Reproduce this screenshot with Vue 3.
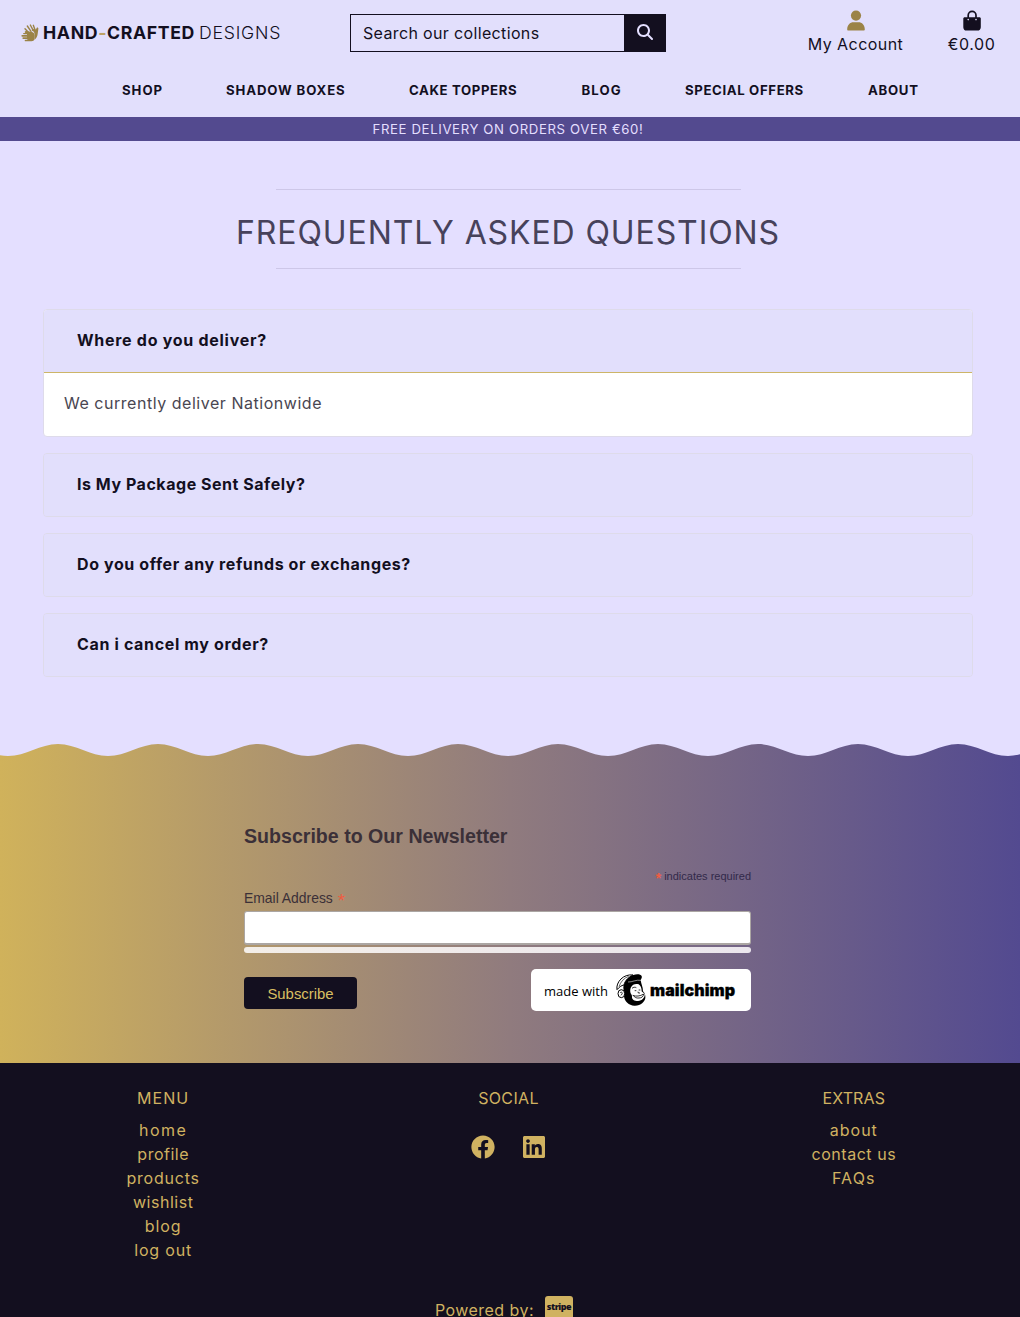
<script setup>
const nav = [
  { label: 'SHOP', width: 40, spacing: 0.95 },
  { label: 'SHADOW BOXES', width: 119, spacing: 0.87 },
  { label: 'CAKE TOPPERS', width: 108.5, spacing: 0.62 },
  { label: 'BLOG', width: 39.5, spacing: 1.1 },
  { label: 'SPECIAL OFFERS', width: 119, spacing: 0.63 },
  { label: 'ABOUT', width: 50, spacing: 0.7 },
]

const faqs = [
  { question: 'Where do you deliver?', answer: 'We currently deliver Nationwide', spacing: 0.72 },
  { question: 'Is My Package Sent Safely?', spacing: 0.53 },
  { question: 'Do you offer any refunds or exchanges?', spacing: 0.6 },
  { question: 'Can i cancel my order?', spacing: 0.65 },
]

const menuLinks = [
  { label: 'home', spacing: 1.5 },
  { label: 'profile', spacing: 0.5 },
  { label: 'products', spacing: 0.78 },
  { label: 'wishlist', spacing: 0.53 },
  { label: 'blog', spacing: 0.95 },
  { label: 'log out', spacing: 0.82 },
]
const extraLinks = [
  { label: 'about', spacing: 0.97 },
  { label: 'contact us', spacing: 0.55 },
  { label: 'FAQs', spacing: 1.15 },
]

const track = (px) => ({ letterSpacing: px + 'px' })

// Crests sit at x = 58 + 100n, troughs at x = 8 + 100n.
let wave = 'M-42 0'
for (let x = -42; x < 1040; x += 100) {
  wave += `C${x + 18} 0 ${x + 32} 12 ${x + 50} 12S${x + 82} 0 ${x + 100} 0`
}
wave += 'Z'
</script>

<template>
  <div class="page">
    <header class="header">
      <div class="top">
        <a class="logo">
          <svg class="hands" viewBox="0 0 54 54" fill="none" stroke-linecap="round">
            <g stroke="#9b8347">
              <path d="M12 14l10 11M19 6l11 16M28 3l9 17M37 4l6 16" stroke-width="4.2" />
              <path d="M35 18c6 1 8 5 9 12" stroke-width="5" />
            </g>
            <path d="M44 18l3-6c2-3 6-1 5 3l-2 15c-1 8-4 13-9 17V29c0-5-2-9-7-12l8-3z" fill="#9b8347" />
            <path d="M18 27l-5 0c-4-3-1-7 3-6l17 3c5 1 8 5 8 10v9c0 6-4 9-10 9H14c-4 0-4-5 0-5h5v-2H7c-4 0-4-5 0-5h11v-2H4c-4 0-4-5 0-5h14v-2H9c-4 0-4-4 0-4z" fill="#9b8347" />
          </svg>
          <span class="brand-bold">HAND<span class="dash">-</span>CRAFTED</span>
          <span class="brand-thin">DESIGNS</span>
        </a>

        <form class="search" @submit.prevent>
          <span class="search-field">Search our collections</span>
          <button class="search-btn" aria-label="Search">
            <svg viewBox="0 0 512 512" width="16" height="16" fill="#e4dfff"><path d="M416 208c0 45.900-14.900 88.300-40 122.700L502.600 457.400c12.500 12.500 12.500 32.800 0 45.300s-32.800 12.500-45.300 0L330.700 376c-34.400 25.200-76.800 40-122.700 40C93.100 416 0 322.900 0 208S93.100 0 208 0s208 93.100 208 208zM208 352a144 144 0 1 0 0-288 144 144 0 1 0 0 288z" /></svg>
          </button>
        </form>

        <div class="tools">
          <a class="tool account">
            <svg viewBox="0 0 18 21" width="18" height="21" fill="#9b8347"><circle cx="9" cy="5.600" r="5.100" /><path d="M.2 19.400C.2 15 3 12.300 6.500 12.300h5c3.500 0 6.300 2.700 6.300 7.100 0 .7-.5 1.100-1.100 1.100H1.300c-.7 0-1.100-.4-1.100-1.100z" /></svg>
            <span>My Account</span>
          </a>
          <a class="tool bag">
            <svg viewBox="0 0 18 21" width="18" height="21"><path d="M5.200 9V5.300a3.900 3.900 0 0 1 7.800 0V9" fill="none" stroke="#130f1f" stroke-width="1.700" /><path d="M1.800 7.200h14.600c.9 0 1.400.6 1.400 1.400v8.600c0 2-1.400 3.400-3.300 3.400h-11C1.600 20.600.3 19.200.3 17.200V8.600c0-.8.6-1.400 1.500-1.400z" fill="#130f1f" /><circle cx="5.200" cy="9.600" r=".8" fill="#e2dffc" /><circle cx="13" cy="9.600" r=".8" fill="#e2dffc" /></svg>
            <span>€0.00</span>
          </a>
        </div>
      </div>

      <nav class="nav">
        <a v-for="n in nav" :key="n.label" :style="{ width: n.width + 'px', letterSpacing: n.spacing + 'px' }">{{ n.label }}</a>
      </nav>
    </header>

    <div class="banner">FREE DELIVERY ON ORDERS OVER €60!</div>

    <main class="main">
      <hr>
      <h1>FREQUENTLY ASKED QUESTIONS</h1>
      <hr>
      <section class="accordion">
        <article v-for="f in faqs" :key="f.question" class="card" :class="{ open: f.answer }">
          <h2 :style="track(f.spacing)">{{ f.question }}</h2>
          <p v-if="f.answer">{{ f.answer }}</p>
        </article>
      </section>
    </main>

    <section class="newsletter">
      <svg class="wave" width="1020" height="12" viewBox="0 0 1020 12"><path :d="wave" fill="#e4dfff" /></svg>
      <form class="form" @submit.prevent>
        <h2>Subscribe to Our Newsletter</h2>
        <div class="required"><span class="star">*</span> indicates required</div>
        <label>Email Address <span class="star">*</span></label>
        <div class="input"></div>
        <div class="response"></div>
        <div class="actions">
          <button class="subscribe">Subscribe</button>
          <a class="badge">
            <span class="made">made with</span>
            <svg class="chimp" viewBox="0 0 90 96" width="30" height="32">
              <path d="M22 40C24 22 38 5 52 3c9-3 22-3 25 3 2 5-2 8-3 13l2 9 4 14 1 10c5 4 8 12 7 20-2 12-13 22-31 23-18 1-31-12-33-28z" fill="#000" />
              <path d="M45 40c4-9 14-12 23-9 6 3 9 13 9 20 0 4 8 4 9 10 1 10-8 20-20 20-11 0-19-5-18-13 1-5-4-7-5-13-1-6 0-11 2-15z" fill="#fff" />
              <path d="M3 47C-1 25 22-1 51 3 38 9 27 19 24 33c-8 1-15 7-21 14z" fill="#fff" stroke="#000" stroke-width="3" />
              <path d="M9 38C14 23 24 12 38 7" fill="none" stroke="#000" stroke-width="1.800" />
              <ellipse cx="16" cy="59" rx="10" ry="12" fill="#fff" stroke="#000" stroke-width="3" />
              <path d="M12 57c4-5 9-1 6 3l-3 4" fill="none" stroke="#000" stroke-width="2.300" />
              <path d="M36 24c12 1 25-8 39-5" fill="none" stroke="#fff" stroke-width="1.600" />
              <path d="M48 43c4-4 9-4 13-2M56 50h5M68 48h5M66 53l1 4h5M50 64c10 4 22 3 33-4-1 8-6 12-14 12-8 1-14-2-16-7" fill="none" stroke="#000" stroke-width="2.400" />
            </svg>
            <span class="mailchimp">mailchimp</span>
          </a>
        </div>
      </form>
    </section>

    <footer class="footer">
      <div class="columns">
        <div class="col">
          <h3 class="menu-title">MENU</h3>
          <a v-for="l in menuLinks" :key="l.label" :style="track(l.spacing)">{{ l.label }}</a>
        </div>
        <div class="col">
          <h3>SOCIAL</h3>
          <div class="social">
            <svg viewBox="0 0 512 512" width="24" height="24"><path d="M504 256C504 119 393 8 256 8S8 119 8 256c0 123.780 90.690 226.380 209.250 245V327.690h-63V256h63v-54.640c0-62.150 37-96.480 93.670-96.480 27.140 0 55.520 4.840 55.520 4.840v61h-31.280c-30.800 0-40.410 19.120-40.410 38.730V256h68.780l-11 71.690h-57.780V501C413.310 482.380 504 379.780 504 256z" /></svg>
            <svg viewBox="0 32 448 448" width="22" height="22"><path d="M416 32H31.900C14.300 32 0 46.500 0 64.300v383.400C0 465.500 14.300 480 31.900 480H416c17.600 0 32-14.500 32-32.300V64.300c0-17.800-14.400-32.300-32-32.300zM135.400 416H69V202.200h66.500V416zm-33.200-243c-21.300 0-38.500-17.300-38.500-38.500S80.900 96 102.200 96c21.200 0 38.500 17.300 38.500 38.500 0 21.300-17.200 38.500-38.500 38.500zm282.100 243h-66.400V312c0-24.800-.5-56.700-34.500-56.700-34.600 0-39.900 27-39.900 54.900V416h-66.400V202.200h63.700v29.200h.9c8.900-16.800 30.600-34.500 62.200-34.500 66.500 0 78.900 43.800 78.900 100.900V416z" /></svg>
          </div>
        </div>
        <div class="col">
          <h3 class="extras-title">EXTRAS</h3>
          <a v-for="l in extraLinks" :key="l.label" :style="track(l.spacing)">{{ l.label }}</a>
        </div>
      </div>
      <div class="powered">
        <span>Powered by:</span>
        <span class="stripe">stripe</span>
      </div>
    </footer>
  </div>
</template>

<style>
html, body { margin: 0; overflow: hidden; background: #e4dfff; }
</style>

<style scoped>
.page {
  width: 1020px;
  height: 1317px;
  overflow: hidden;
  background: #e4dfff;
  color: #130f1f;
  font: 400 16px/24px Inter, "Liberation Sans", sans-serif;
}
.page * { box-sizing: border-box; }
h1, h2, h3, p, hr, form { margin: 0; }
svg { display: block; flex: none; }
button { border: 0; padding: 0; font: inherit; }

.header { height: 117px; background: #e2dffc; }
.top { display: grid; grid-template-columns: 350px 316px 1fr; align-items: center; height: 66px; }
.logo { display: flex; align-items: center; padding-left: 21px; font-size: 17.7px; white-space: nowrap; }
.hands { width: 18px; height: 18px; }
.brand-bold { margin-left: 4px; width: 156px; font-weight: 700; letter-spacing: 0.62px; }
.dash { color: #bda165; }
.brand-thin { font-weight: 300; letter-spacing: 0.75px; }
.search { display: flex; height: 38px; border: 1px solid #130f1f; }
.search-field { flex: 1; padding-left: 12px; line-height: 37px; letter-spacing: 0.35px; }
.search-btn { display: flex; justify-content: center; width: 41px; padding-top: 9px; background: #130f1f; }
.tools { display: flex; justify-content: flex-end; gap: 45px; padding-right: 25px; }
.tool { display: flex; flex-direction: column; align-items: center; height: 46px; white-space: nowrap; }
.tool span { line-height: 27px; }
.account { width: 95px; letter-spacing: 0.45px; }
.bag { width: 47px; letter-spacing: 0.6px; }
.nav { display: flex; gap: 64px; padding-left: 122px; font-size: 13.2px; font-weight: 700; line-height: 49px; white-space: nowrap; }
.banner { height: 24px; padding-right: 4px; background: #534a8f; color: #e4dfff; font-size: 13.2px; letter-spacing: 0.62px; line-height: 25px; text-align: center; }

.main { height: 603px; padding: 48px 47px 0 43px; }
hr { width: 465px; height: 1px; margin: 0 auto; border: 0; background: #cdc7e8; }
h1 { height: 78px; padding-top: 8px; color: #47425b; font-size: 32px; font-weight: 400; line-height: 70px; letter-spacing: 0.9px; text-align: center; white-space: nowrap; }
.accordion { display: flex; flex-direction: column; gap: 16px; margin-top: 40px; }
.card { height: 64px; overflow: hidden; border: 1px solid #dedbea; border-radius: 4px; background: #e2dffc; }
.card.open { height: 128px; background: #fff; }
.card h2 { height: 62px; padding-left: 33px; background: #e2dffc; font-size: 16px; font-weight: 700; line-height: 61px; }
.card p { border-top: 1px solid #cdb568; padding-left: 20px; color: #494651; letter-spacing: 0.53px; line-height: 61px; }

.newsletter { height: 319px; background: linear-gradient(90deg, #d0b25b, #907b7e 50%, #534a90); color: #3b3038; font-family: "Liberation Sans", Arial, sans-serif; }
.form { width: 507px; margin-left: 244px; padding-top: 68px; }
.form h2 { font-size: 19.6px; font-weight: 700; line-height: 24px; }
.required { margin-top: 20px; color: #32294a; font-size: 11px; line-height: 17px; height: 17px; text-align: right; white-space: nowrap; }
.star { color: #f05c41; }
.required .star { font-size: 14px; font-weight: 700; line-height: 10px; vertical-align: -3px; }
label { display: block; height: 22px; margin-top: 4px; font-size: 13.9px; line-height: 19px; }
label .star { margin-left: 1px; font-size: 19px; line-height: 14px; vertical-align: -4px; }
.input { height: 34px; border: 1px solid #aba6a3; border-bottom-width: 2px; border-radius: 3px; background: #fff; }
.response { height: 6px; margin-top: 2px; border-radius: 3px; background: linear-gradient(90deg, #f3eee8, #ebe6ed); }
.actions { display: flex; align-items: center; justify-content: space-between; margin-top: 16px; }
.subscribe { flex: none; align-self: flex-end; width: 113px; height: 32px; margin-bottom: 2px; padding-top: 2px; border-radius: 4px; background: #130f1f; color: #d9bf62; font-size: 14.9px; }
.badge { display: flex; flex: none; align-items: center; width: 220px; height: 42px; padding-left: 13px; border-radius: 5px; background: #fff; color: #000; }
.made { width: 72px; padding-top: 2px; font: 400 13px/20px "Open Sans", sans-serif; white-space: nowrap; }
.mailchimp { margin-left: 4px; font: 900 16px/20px Inter, sans-serif; letter-spacing: 0.1px; -webkit-text-stroke: 0.3px #000; }

.footer { height: 254px; overflow: hidden; background: #130f1f; color: #d0b261; }
.columns { display: grid; grid-template-columns: repeat(3, 345.33px); height: 212px; margin-left: -9.5px; padding-top: 23px; }
.col { display: flex; flex-direction: column; align-items: center; }
h3 { margin-bottom: 8px; font-size: 16px; font-weight: 400; letter-spacing: 0.34px; }
.menu-title { letter-spacing: 1.1px; }
.extras-title { letter-spacing: 0.1px; }
.social { display: flex; align-items: center; gap: 28px; margin-top: 17px; fill: #d0b261; }
.powered { display: flex; height: 42px; padding-left: 435px; letter-spacing: 0.45px; line-height: 70px; white-space: nowrap; }
.stripe { width: 28px; height: 28px; margin: 21px 0 0 11px; border-radius: 3px; background: #d0b261; color: #130f1f; font: 800 9px/21px "Open Sans", sans-serif; letter-spacing: -0.5px; text-align: center; }
</style>
